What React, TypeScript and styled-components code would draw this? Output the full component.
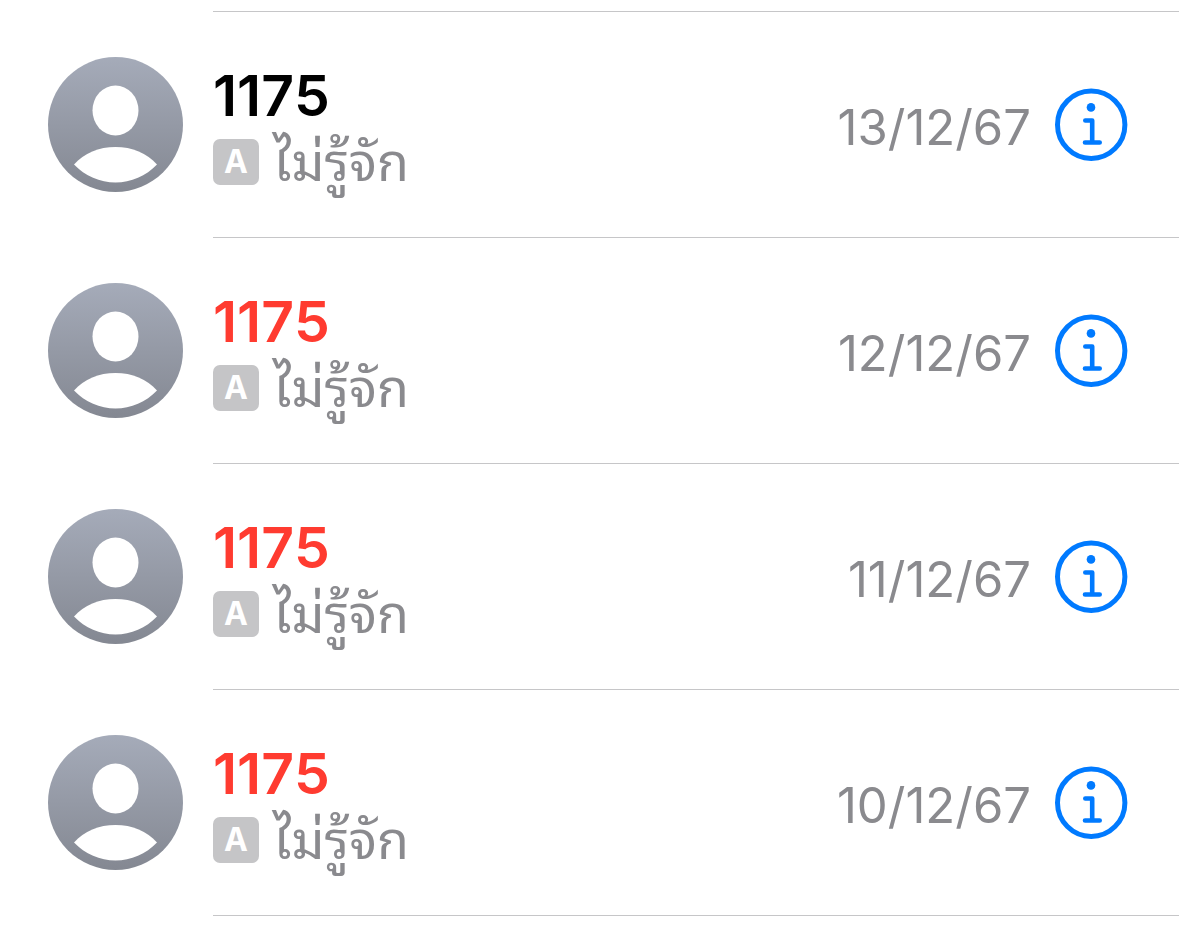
import React from "react";
import styled, { createGlobalStyle } from "styled-components";

const GlobalStyle = createGlobalStyle`
  * { box-sizing: border-box; }
  body {
    margin: 0;
    background: #ffffff;
    font-family: Inter, "Liberation Sans", sans-serif;
  }
`;

const List = styled.ul`
  list-style: none;
  margin: 0;
  padding: 11px 0 0 48px;
`;

const Row = styled.li`
  display: flex;
  align-items: flex-start;
  gap: 30px;
`;

const Avatar = styled.svg`
  flex: none;
  width: 135px;
  height: 135px;
  margin-top: 46px;
`;

const Body = styled.div<{ $last: boolean }>`
  flex: 1;
  min-width: 0;
  min-height: ${(p) => (p.$last ? 227 : 226)}px;
  display: flex;
  align-items: center;
  padding-right: 51px;
  border-top: 1px solid #c6c6c8;
  border-bottom: ${(p) => (p.$last ? "1px solid #c6c6c8" : "none")};
`;

const Caller = styled.div`
  flex: 1;
  min-width: 0;
`;

const Name = styled.div<{ $missed: boolean }>`
  padding-top: 3px;
  font-size: 57px;
  line-height: 72px;
  font-weight: 600;
  font-kerning: none;
  color: ${(p) => (p.$missed ? "#ff3b30" : "#000000")};
`;

const Detail = styled.div`
  display: flex;
  align-items: center;
  gap: 14px;
  height: 60px;
`;

const Badge = styled.span`
  flex: none;
  width: 46px;
  height: 46px;
  border-radius: 7px;
  background: #c5c5c7;
  color: #ffffff;
  font-size: 32px;
  line-height: 46px;
  font-weight: 700;
  text-align: center;
`;

const Label = styled.span`
  padding-bottom: 8px;
  font-family: "Noto Looped Thai", "Noto Sans Thai Looped", "Noto Serif Thai", Loma, Garuda, Waree, Norasi, Kinnari, serif;
  font-size: 52px;
  line-height: 60px;
  color: #8a8a8e;
  white-space: nowrap;
`;

const CallDate = styled.time`
  padding-top: 6px;
  font-size: 49px;
  line-height: 60px;
  color: #8a8a8e;
  white-space: nowrap;
`;

const InfoButton = styled.button`
  flex: none;
  width: 73px;
  height: 73px;
  margin-left: 24px;
  padding: 0;
  border: 0;
  background: none;
  cursor: pointer;

  svg {
    display: block;
    width: 100%;
    height: 100%;
  }
`;

const calls = [
  { number: "1175", date: "13/12/67", missed: false },
  { number: "1175", date: "12/12/67", missed: true },
  { number: "1175", date: "11/12/67", missed: true },
  { number: "1175", date: "10/12/67", missed: true },
];

function Person({ id }: { id: string }) {
  return (
    <Avatar viewBox="0 0 135 135" aria-hidden="true">
      <defs>
        <linearGradient id={id} x1="0" y1="0" x2="0" y2="1">
          <stop offset="0" stopColor="#a5abb9" />
          <stop offset="1" stopColor="#848892" />
        </linearGradient>
      </defs>
      <circle cx="67.5" cy="67.5" r="67.5" fill={`url(#${id})`} />
      <ellipse cx="67.5" cy="53.5" rx="23" ry="25" fill="#fff" />
      <path
        d="M26 107.5C36 96 51 90 67.5 90S99 96 109 107.5C98 119 83 125.5 67.5 125.5S37 119 26 107.5Z"
        fill="#fff"
      />
    </Avatar>
  );
}

function InfoIcon() {
  return (
    <svg viewBox="0 0 73 73" fill="none" stroke="#007aff" aria-hidden="true">
      <circle cx="36.2" cy="36.7" r="33.7" strokeWidth="5" />
      <circle cx="36" cy="19.4" r="4.3" fill="#007aff" stroke="none" />
      <path
        d="M30.3 32.5H37.2V54.5M30 54.5H44.7"
        strokeWidth="4.6"
        strokeLinecap="round"
        strokeLinejoin="round"
      />
    </svg>
  );
}

export default function App() {
  return (
    <>
      <GlobalStyle />
      <List>
        {calls.map((call, i) => (
          <Row key={call.date}>
            <Person id={`avatar-${i}`} />
            <Body $last={i === calls.length - 1}>
              <Caller>
                <Name $missed={call.missed}>{call.number}</Name>
                <Detail>
                  <Badge>A</Badge>
                  <Label lang="th">ไม่รู้จัก</Label>
                </Detail>
              </Caller>
              <CallDate>{call.date}</CallDate>
              <InfoButton type="button" aria-label={`${call.number} ${call.date}`}>
                <InfoIcon />
              </InfoButton>
            </Body>
          </Row>
        ))}
      </List>
    </>
  );
}
